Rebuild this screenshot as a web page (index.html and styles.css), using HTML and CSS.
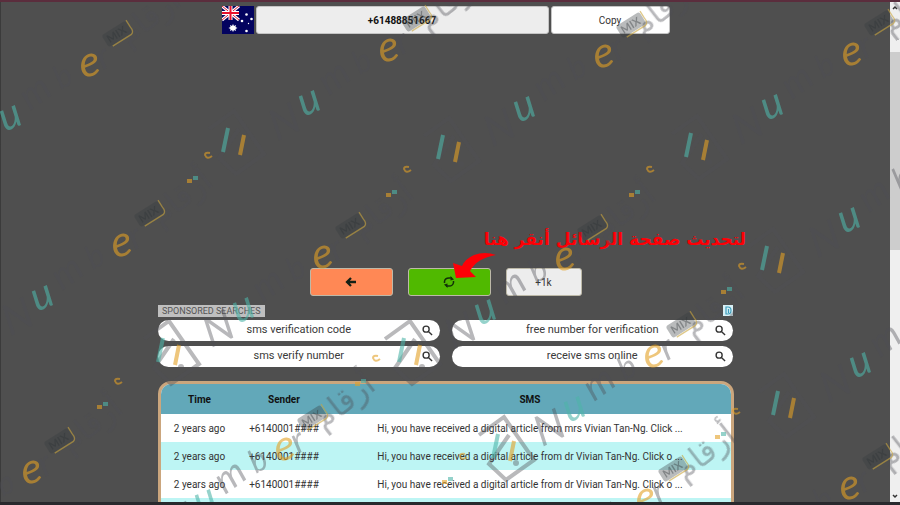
FILE: index.html
```
<!DOCTYPE html>
<html lang="en">
<head>
<meta charset="utf-8">
<title>+61488851667</title>
<link rel="stylesheet" href="styles.css">
</head>
<body>
<div class="window">
  <main class="page">
    <div class="number-row">
      <svg class="flag" viewBox="0 0 32 28" aria-hidden="true">
        <rect width="32" height="28" fill="#03035f"/>
        <path d="M0 0L17 14M17 0L0 14" stroke="#fff" stroke-width="3"/>
        <path d="M0 0L17 14M17 0L0 14" stroke="#e0203a" stroke-width="1"/>
        <path d="M8.500 0V14M0 7H17" stroke="#fff" stroke-width="4"/>
        <path d="M8.500 0V14M0 7H17" stroke="#e8102c" stroke-width="2"/>
        <g fill="#fff"><path d="M11 18l1 2 2-1-.5 2 2 1-2 1 .5 2-2-1-1 2-1-2-2 1 .5-2-2-1 2-1-.5-2 2 1z"/><circle cx="24.500" cy="8.500" r="1.300"/><circle cx="20" cy="15" r="1.300"/><circle cx="29.500" cy="13" r="1.300"/><circle cx="24.500" cy="25" r="1.300"/><circle cx="26.500" cy="17.500" r=".7"/></g>
      </svg>
      <output class="number">+61488851667</output>
      <button class="copy" type="button">Copy</button>
    </div>

    <div class="actions">
      <button class="action back" type="button" aria-label="Back">
        <svg width="12" height="10" viewBox="0 0 12 10"><path d="M6 1L2 5l4 4M2 5h9" fill="none" stroke="#152015" stroke-width="2.300"/></svg>
      </button>
      <button class="action refresh" type="button" aria-label="Refresh">
        <svg width="12" height="12" viewBox="0 0 12 12"><path d="M1.500 7V5.500Q2 2 6 2H9M10.500 5v1.500Q10 10 6 10H3" fill="none" stroke="#123008" stroke-width="1.500"/><path d="M7.500 0v4.500L11 3.500zM4.500 12V7.500L1 8.500z" fill="#123008"/></svg>
      </button>
      <button class="action count" type="button">+1k</button>
    </div>

    <section class="sponsored">
      <header class="sponsored-head">
        <h2 class="sponsored-title">SPONSORED SEARCHES</h2>
        <svg class="info" viewBox="0 0 10 11" aria-hidden="true"><rect width="10" height="11" fill="#d9f0f6"/><path d="M3 2h2q3 0 3 3.500T5 9H3zM5.500 4v4" fill="none" stroke="#3c9dbb" stroke-width="1.200"/></svg>
      </header>
      <nav class="searches">
        <a class="search" href="#">sms verification code<svg class="lens" viewBox="0 0 12 12"><circle cx="4.500" cy="4.500" r="3.300"/><path d="M7 7l4 4"/></svg></a>
        <a class="search" href="#">free number for verification<svg class="lens" viewBox="0 0 12 12"><circle cx="4.500" cy="4.500" r="3.300"/><path d="M7 7l4 4"/></svg></a>
        <a class="search" href="#">sms verify number<svg class="lens" viewBox="0 0 12 12"><circle cx="4.500" cy="4.500" r="3.300"/><path d="M7 7l4 4"/></svg></a>
        <a class="search" href="#">receive sms online<svg class="lens" viewBox="0 0 12 12"><circle cx="4.500" cy="4.500" r="3.300"/><path d="M7 7l4 4"/></svg></a>
      </nav>
    </section>

    <div class="messages">
      <table>
        <colgroup><col class="col-time"><col class="col-sender"><col></colgroup>
        <thead><tr><th>Time</th><th>Sender</th><th>SMS</th></tr></thead>
        <tbody>
          <tr><td>2 years ago</td><td>+6140001####</td><td>Hi, you have received a digital article from mrs Vivian Tan-Ng. Click ...</td></tr>
          <tr><td>2 years ago</td><td>+6140001####</td><td>Hi, you have received a digital article from dr Vivian Tan-Ng. Click o ...</td></tr>
          <tr><td>2 years ago</td><td>+6140001####</td><td>Hi, you have received a digital article from dr Vivian Tan-Ng. Click o ...</td></tr>
          <tr><td></td><td></td><td></td></tr>
        </tbody>
      </table>
    </div>

    <p class="note" lang="ar" dir="rtl">لتحديث صفحة الرسائل أنقر هنا</p>
    <svg class="pointer" viewBox="0 0 46 28" aria-hidden="true"><path d="M45 4Q34 0 23 4Q14 8 11 15L2 12L5 27L25 26L19 20Q26 7 45 4z" fill="#fd0006"/></svg>
  </main>

  <div class="scrollbar" aria-hidden="true">
    <svg class="chevron" viewBox="0 0 8 6"><path d="M2 4l2-2 2 2"/></svg>
    <div class="thumb"></div>
    <svg class="chevron down" viewBox="0 0 8 6"><path d="M2 2l2 2 2-2"/></svg>
  </div>

  <svg class="watermark" viewBox="0 0 900 505" preserveAspectRatio="xMidYMid slice" aria-hidden="true">
    <defs>
      <g id="word">
        <g class="ink">
          <text transform="translate(-35 38) rotate(-25)" font-size="42">N</text>
          <text transform="translate(17 -7) rotate(-36)" font-size="38">m</text>
          <text transform="translate(48 -28) rotate(-30)" font-size="32">b</text>
          <text transform="translate(90 -48) rotate(-30)" font-size="36">r</text>
          <text class="arabic" transform="translate(115 -71) rotate(-38)" font-size="32">أرقام</text>
        </g>
        <text class="teal" transform="translate(-8 14) rotate(-24)" font-size="41">u</text>
        <text class="gold" transform="translate(69 -40) rotate(-12)" font-size="43">e</text>
        <g transform="translate(104 -84) rotate(-32)">
          <rect class="badge" x="-14" y="-7" width="28" height="14" rx="3"/>
          <path class="badge-edge" d="M-10 8H12Q16 7 15 1V-7"/>
          <text class="badge-text" x="-11" y="4">MIX</text>
        </g>
      </g>
      <g id="mark">
        <path class="frame" d="M-17-11L8-29L38 14L10 34L-7 18L13-11"/>
        <circle class="dot" cx="20" cy="17" r="3"/>
        <path class="teal-line" d="M2-12L-3 12"/>
        <path class="gold-line" d="M18-5L14 15"/>
      </g>
      <g id="specks">
        <path class="gold-line thin" d="M2-3q-5-1-5 2q2 5 7 1"/>
        <path class="teal-line" d="M-15 22h5"/>
        <path class="gold-line" d="M-21 25h5"/>
      </g>
    </defs>
    <use href="#word" x="13" y="118"/><use href="#word" x="312" y="103"/><use href="#word" x="527" y="109"/><use href="#word" x="775" y="107"/>
    <use href="#word" x="45" y="298"/><use href="#word" x="246" y="310"/><use href="#word" x="488" y="312"/><use href="#word" x="852" y="220"/>
    <use href="#word" x="-45" y="525"/><use href="#word" x="208" y="502"/><use href="#word" x="577" y="409"/><use href="#word" x="863" y="365"/>
    <use href="#word" x="773" y="541"/><use href="#word" x="569" y="553"/>
    <use href="#mark" x="226" y="140"/><use href="#mark" x="441" y="147"/><use href="#mark" x="689" y="145"/><use href="#mark" x="765" y="258"/>
    <use href="#mark" x="402" y="350"/><use href="#mark" x="161" y="350"/><use href="#mark" x="496" y="446"/><use href="#mark" x="776" y="403"/>
    <use href="#specks" x="208" y="156"/><use href="#specks" x="407" y="170"/><use href="#specks" x="650" y="170"/><use href="#specks" x="742" y="267"/>
    <use href="#specks" x="376" y="359"/><use href="#specks" x="118" y="382"/><use href="#specks" x="736" y="412"/><use href="#specks" x="463" y="457"/>
  </svg>
</div>
</body>
</html>
```
FILE: styles.css
```
* { box-sizing: border-box; }

body {
  margin: 0;
  overflow: hidden;
  background: #4f4f4f;
  color: #333;
  font-family: Roboto, "Liberation Sans", sans-serif;
  font-size: 10px;
}

h2, p { margin: 0; font-weight: 400; }
button { font: inherit; color: inherit; padding: 0; }

.window {
  position: relative;
  display: flex;
  height: 100vh;
  overflow: hidden;
  border-top: 2px solid #5b2d3d;
  border-bottom: 3px solid #29292d;
}

.page {
  position: relative;
  flex: 1;
  display: flex;
  flex-direction: column;
  align-items: center;
  padding-top: 4px;
  border-left: 1px solid #3b3b3b;
}

.number-row { display: flex; gap: 2px; width: 448px; max-width: 100%; flex: none; }
.flag { width: 32px; height: 28px; }
.number, .copy {
  display: flex;
  align-items: center;
  justify-content: center;
  height: 28px;
  border: 1px solid #c4c4c4;
  border-radius: 3px;
}
.number { flex: 1; background: #ededed; color: #111; font-weight: 700; }
.copy { width: 119px; background: #fff; }

.actions { display: flex; gap: 15px; margin-top: 234px; }
.action {
  display: flex;
  align-items: center;
  justify-content: center;
  width: 83px;
  height: 28px;
  border: 1px solid #bdb9a8;
  border-radius: 3px;
}
.back { background: #ff8855; }
.refresh { background: #50b900; }
.count { width: 76px; background: #ededed; }

.sponsored { width: 575px; max-width: 100%; margin-top: 8px; }
.sponsored-head { display: flex; align-items: center; justify-content: space-between; height: 13px; }
.sponsored-title { padding: 0 4px; background: #bfbfbf; color: #555; font-size: 9px; line-height: 12px; }
.info { width: 10px; height: 11px; }
.searches { display: grid; grid-template-columns: 1fr 1fr; gap: 5px 12px; margin-top: 3px; }
.search {
  position: relative;
  height: 21px;
  border-radius: 11px;
  background: #fff;
  color: #3a3a3a;
  font-size: 11px;
  line-height: 20px;
  text-align: center;
  text-decoration: none;
}
.lens { position: absolute; right: 7px; top: 5px; width: 11px; height: 11px; fill: none; stroke: #333; stroke-width: 1.5; }

.messages {
  width: 576px;
  max-width: 100%;
  margin-top: 14px;
  overflow: hidden;
  flex: none;
  border: 3px solid #cba67d;
  border-radius: 13px 13px 0 0;
  background: #fff;
}
table { width: 100%; border-collapse: collapse; table-layout: fixed; }
.col-time { width: 78px; }
.col-sender { width: 91px; }
th { height: 30px; padding: 0; background: #62a8b9; color: #111; font-weight: 700; }
td { height: 28px; padding: 0; text-align: center; white-space: nowrap; }
tbody tr:nth-child(even) { background: #bdf5f4; }

.note {
  position: absolute;
  right: 144px;
  top: 222px;
  color: #fd0006;
  font-family: "DejaVu Sans", sans-serif;
  font-size: 17px;
  font-weight: 700;
  line-height: 30px;
  white-space: nowrap;
}
.pointer { position: absolute; left: 450px; top: 249px; width: 46px; height: 28px; }

.scrollbar {
  display: flex;
  flex-direction: column;
  align-items: center;
  width: 10px;
  padding: 3px 0;
  background: #efefef;
}
.chevron { width: 8px; height: 6px; flex: none; fill: none; stroke: #333; stroke-width: 1.5; }
.thumb { width: 100%; height: 40%; margin-top: 41px; background: #cdcdcd; }
.down { margin-top: auto; }

.watermark { position: absolute; inset: -2px 0 auto; width: 100%; height: 100vh; pointer-events: none; }
.watermark text { font-family: Lato, sans-serif; font-style: italic; font-weight: 400; }
.watermark .arabic { font-family: "DejaVu Sans", sans-serif; font-style: normal; }
.ink { fill: #4f4f56; opacity: 0.4; }
.teal { fill: #4fb5a8; opacity: 0.6; }
.gold { fill: #e3a024; opacity: 0.6; }
.watermark .badge-text { fill: #2f3437; font-style: normal; font-size: 11px; font-weight: 700; opacity: 0.4; }
.badge { fill: #373d40; opacity: 0.35; }
.badge-edge { fill: none; stroke: #c9a53c; stroke-width: 1.3; opacity: 0.6; }
.frame { fill: none; stroke: #4f4f56; stroke-width: 4; opacity: 0.4; }
.dot { fill: #4f4f56; opacity: 0.4; }
.teal-line { stroke: #4fb5a8; stroke-width: 4; opacity: 0.6; }
.gold-line { fill: none; stroke: #e3a024; stroke-width: 4; opacity: 0.6; }
.thin { stroke-width: 2; }
```
